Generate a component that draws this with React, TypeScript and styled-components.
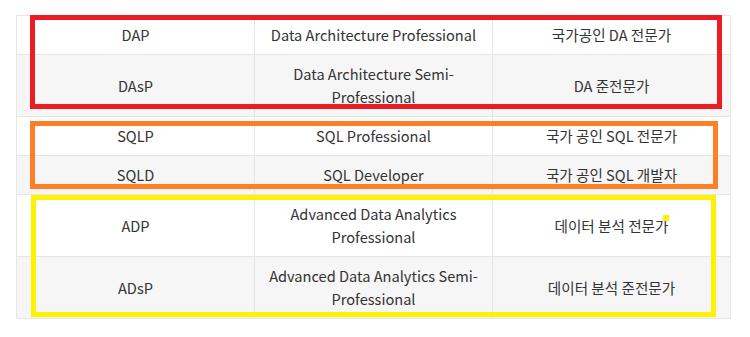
import React from 'react';
import styled, { createGlobalStyle } from 'styled-components';

const GlobalStyle = createGlobalStyle`
  html, body {
    margin: 0;
    padding: 0;
    background: #ffffff;
  }
  body {
    font-family: "Noto Sans CJK KR", "Noto Sans", sans-serif;
  }
`;

const Page = styled.div`
  position: relative;
  width: 750px;
  height: 337px;
  padding: 15px 0 0 16px;
  box-sizing: border-box;
`;

const Table = styled.table`
  width: 715px;
  border-collapse: collapse;
  table-layout: fixed;
  border: 1px solid #ececec;
  font-size: 14.6px;
  line-height: 23px;
  color: #333333;
`;

const Row = styled.tr<{ $striped?: boolean }>`
  background: ${(p) => (p.$striped ? '#f6f6f6' : '#ffffff')};
`;

const Cell = styled.td`
  border: 1px solid #e6e6e6;
  padding: 7px 10px 8px;
  text-align: center;
  vertical-align: middle;
  word-break: keep-all;
`;

// paint-style marker boxes drawn over the table
const Highlight = styled.div<{ $color: string; $x: number; $y: number; $w: number; $h: number }>`
  position: absolute;
  left: ${(p) => p.$x}px;
  top: ${(p) => p.$y}px;
  width: ${(p) => p.$w}px;
  height: ${(p) => p.$h}px;
  border: 5px solid ${(p) => p.$color};
  box-sizing: border-box;
  pointer-events: none;
`;

const Dot = styled.span`
  position: absolute;
  left: 663px;
  top: 215px;
  width: 6px;
  height: 6px;
  background: #fff200;
`;

const rows = [
  ['DAP', 'Data Architecture Professional', '국가공인 DA 전문가'],
  ['DAsP', 'Data Architecture Semi-Professional', 'DA 준전문가'],
  ['SQLP', 'SQL Professional', '국가 공인 SQL 전문가'],
  ['SQLD', 'SQL Developer', '국가 공인 SQL 개발자'],
  ['ADP', 'Advanced Data Analytics Professional', '데이터 분석 전문가'],
  ['ADsP', 'Advanced Data Analytics Semi-Professional', '데이터 분석 준전문가'],
];

export default function App() {
  return (
    <Page>
      <GlobalStyle />
      <Table>
        <tbody>
          {rows.map((r, i) => (
            <Row key={r[0]} $striped={i % 2 === 1}>
              <Cell>{r[0]}</Cell>
              <Cell>{r[1]}</Cell>
              <Cell>{r[2]}</Cell>
            </Row>
          ))}
        </tbody>
      </Table>
      <Highlight $color="#ed1c24" $x={30} $y={15} $w={692} $h={94} />
      <Highlight $color="#ff7f27" $x={30} $y={121} $w={688} $h={68} />
      <Highlight $color="#fff200" $x={31} $y={195} $w={685} $h={122} />
      <Dot />
    </Page>
  );
}
